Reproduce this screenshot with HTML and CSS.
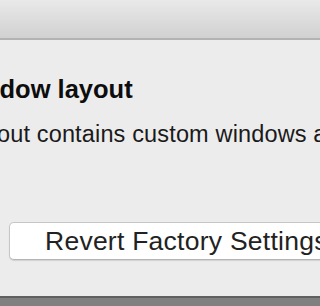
FILE: index.html
```html
<!DOCTYPE html>
<html lang="en">
<head>
    <meta charset="UTF-8">
    <title>Reset Window Layout</title>
    <link rel="stylesheet" href="styles.css">
</head>
<body>
    <div class="window">
        <div class="title-bar"></div>
        <div class="dialog-body">
            <h2 class="dialog-title">Custom window layout</h2>
            <p class="dialog-text">The current layout contains custom windows and panels.</p>
            <div class="button-row">
                <button class="revert-button">Revert Factory Settings</button>
            </div>
        </div>
        <div class="status-bar"></div>
    </div>
</body>
</html>
```

FILE: styles.css
```css
/* Basic Reset */
* {
    margin: 0;
    padding: 0;
    box-sizing: border-box;
}

body {
    font-family: 'Liberation Sans', Arial, sans-serif;
    background-color: #ececec;
    overflow: hidden;
}

.window {
    display: flex;
    flex-direction: column;
    height: 306px;
}

.title-bar {
    height: 40px;
    background: linear-gradient(#e9e9e9, #d1d1d1);
    border-bottom: 2px solid #b3b3b3;
}

.dialog-body {
    flex: 1;
    padding-top: 34px;
    white-space: nowrap;
}

.dialog-title {
    font-size: 25.5px;
    line-height: 30px;
    font-weight: 700;
    color: #0d0d0d;
    margin-left: -145px;
}

.dialog-text {
    font-size: 23.5px;
    line-height: 28px;
    color: #1a1a1a;
    letter-spacing: 0.15px;
    margin-top: 16px;
    margin-left: -162px;
}

.button-row {
    margin-top: 74px;
    padding-left: 9px;
}

.revert-button {
    width: 420px;
    height: 38px;
    line-height: 36px;
    padding-left: 35px;
    text-align: left;
    font-family: 'Liberation Sans', Arial, sans-serif;
    font-size: 26.5px;
    letter-spacing: 0.25px;
    color: #222222;
    background-color: #ffffff;
    border: 1px solid #c6c6c6;
    border-bottom-color: #b4b4b4;
    border-radius: 5px;
    box-shadow: 0 1px 1px rgba(0, 0, 0, 0.12);
}

.status-bar {
    height: 10px;
    background-color: #808080;
    border-top: 2px solid #606060;
}
```
